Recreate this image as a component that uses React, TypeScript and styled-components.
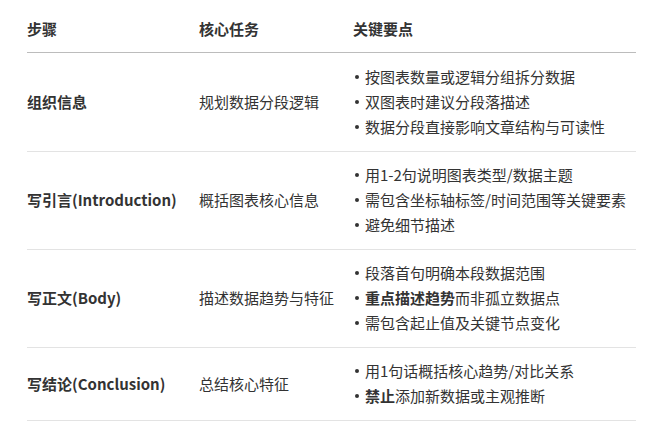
import React from "react";
import styled, { createGlobalStyle } from "styled-components";

const Global = createGlobalStyle`
  html, body { margin: 0; padding: 0; background: #ffffff; }
  body {
    font-family: "Noto Sans CJK SC", "Noto Sans", sans-serif;
    color: #333333;
    -webkit-font-smoothing: antialiased;
  }
`;

const Page = styled.div`
  width: 660px;
  height: 432px;
  padding: 0 24px 0 27px;
  box-sizing: border-box;
`;

const Table = styled.div`
  display: grid;
  grid-template-columns: 172px 154px 1fr;
  width: 609px;
`;

const HeadCell = styled.div`
  font-size: 15px;
  font-weight: 700;
  line-height: 25px;
  padding: 16px 0 11px;
  border-bottom: 1px solid #bcbcbc;
  color: #333333;
`;

const Cell = styled.div<{ $first?: boolean; $bold?: boolean; $last?: boolean }>`
  display: flex;
  align-items: center;
  font-size: 15px;
  line-height: 25px;
  font-weight: ${(p) => (p.$bold ? 700 : 400)};
  padding: ${(p) => (p.$first ? "11px 0 12px" : "10px 0 12px")};
  border-bottom: 1px solid #e3e3e3;
  color: #333333;
`;

const List = styled.ul`
  list-style: none;
  margin: 0;
  padding: 0;
`;

const Item = styled.li`
  position: relative;
  padding-left: 12px;
  white-space: nowrap;
  &::before {
    content: "";
    position: absolute;
    left: 2px;
    top: 11px;
    width: 4px;
    height: 4px;
    border-radius: 50%;
    background: #333333;
  }
`;

const Strong = styled.b`
  font-weight: 700;
`;

type Row = { step: string; task: string; points: React.ReactNode[] };

const rows: Row[] = [
  {
    step: "组织信息",
    task: "规划数据分段逻辑",
    points: ["按图表数量或逻辑分组拆分数据", "双图表时建议分段落描述", "数据分段直接影响文章结构与可读性"],
  },
  {
    step: "写引言(Introduction)",
    task: "概括图表核心信息",
    points: ["用1-2句说明图表类型/数据主题", "需包含坐标轴标签/时间范围等关键要素", "避免细节描述"],
  },
  {
    step: "写正文(Body)",
    task: "描述数据趋势与特征",
    points: [
      "段落首句明确本段数据范围",
      <>
        <Strong>重点描述趋势</Strong>而非孤立数据点
      </>,
      "需包含起止值及关键节点变化",
    ],
  },
  {
    step: "写结论(Conclusion)",
    task: "总结核心特征",
    points: [
      "用1句话概括核心趋势/对比关系",
      <>
        <Strong>禁止</Strong>添加新数据或主观推断
      </>,
    ],
  },
];

export default function App() {
  return (
    <>
      <Global />
      <Page>
        <Table>
          <HeadCell>步骤</HeadCell>
          <HeadCell>核心任务</HeadCell>
          <HeadCell>关键要点</HeadCell>
          {rows.map((r, i) => (
            <React.Fragment key={i}>
              <Cell $first={i === 0} $bold>
                {r.step}
              </Cell>
              <Cell $first={i === 0}>{r.task}</Cell>
              <Cell $first={i === 0}>
                <List>
                  {r.points.map((p, j) => (
                    <Item key={j}>{p}</Item>
                  ))}
                </List>
              </Cell>
            </React.Fragment>
          ))}
        </Table>
      </Page>
    </>
  );
}
